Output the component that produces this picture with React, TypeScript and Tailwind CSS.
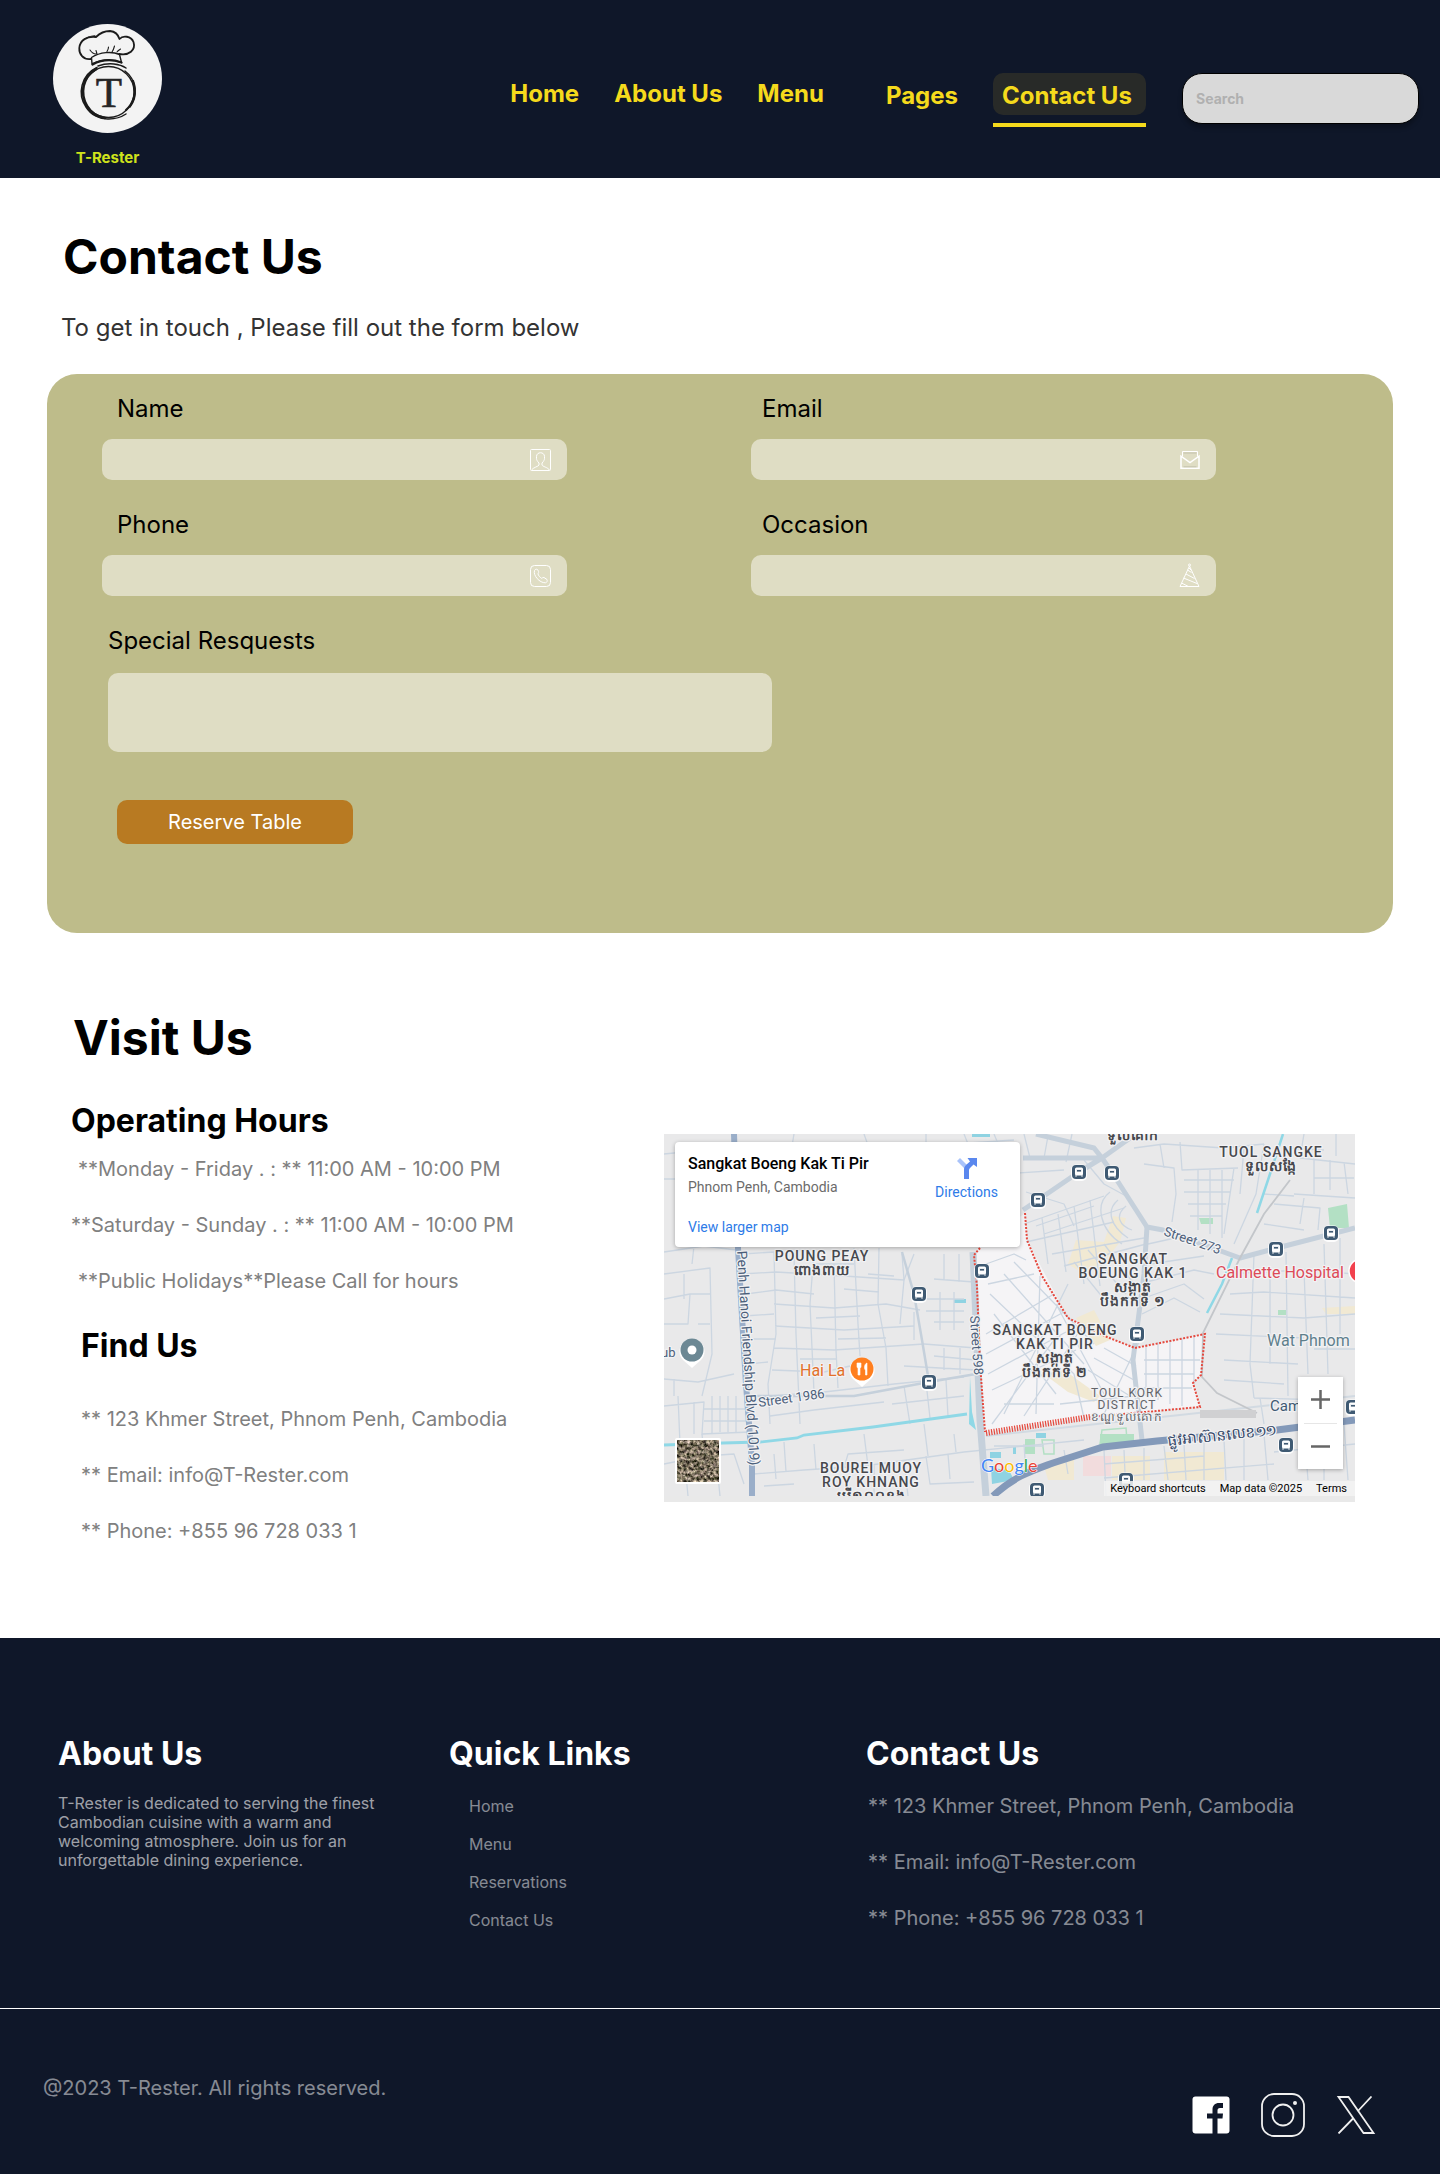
import type { ReactNode } from "react";

const NAV_LINKS = ["Home", "About Us", "Menu"];
const QUICK_LINKS = ["Home", "Menu", "Reservations", "Contact Us"];
const HOURS = [
  { text: "**Monday - Friday . : ** 11:00 AM - 10:00 PM", indent: true },
  { text: "**Saturday - Sunday . : ** 11:00 AM - 10:00 PM", indent: false },
  { text: "**Public Holidays**Please Call for hours", indent: true },
];
const ADDRESS = [
  "** 123 Khmer Street, Phnom Penh, Cambodia",
  "** Email: info@T-Rester.com",
  "** Phone: +855 96 728 033 1",
];

function Logo() {
  return (
    <svg viewBox="0 0 109 109" className="size-[109px]" role="img" aria-label="T-Rester logo">
      <circle cx="54.5" cy="54.5" r="54.5" fill="#f3f3f3" />
      <g fill="none" stroke="#1b1b1b" strokeLinecap="round" strokeLinejoin="round">
        <path d="M38 35C30 36 26 30 26.300 24C27 16 34 12 43 13C47 9 52 7 57 7C62 7.500 65 10 66.500 15C70 11 78 12 80.500 18C83 26 76 32 66 30" strokeWidth="1.800" />
        <path d="M30 16C34 13 38 12 42 11.500" strokeWidth="0.800" />
        <path d="M39 40L38.500 33.500C47 28 59 27 66.500 30.500L68.500 38.500C58 34.500 48 35.500 39 40Z" strokeWidth="1.400" />
        <path d="M39.500 40.500C48 36 59 35 68.500 38.500" strokeWidth="2.200" />
        <path d="M37 26C39 29 41 30 43 30M43 26.500L44 30M54 27.500C55 26 55.500 25 55.500 23M59 28C60.500 26 61 24 61.500 22M64 28C65 26.500 66 26 67.500 25" strokeWidth="1.100" />
        <circle cx="55.500" cy="68" r="25.500" strokeWidth="1.300" />
        <path d="M44 43.500C28 51 24 70 33 83C38 91 47 95.500 56 95C64 95 70 92 73 90" strokeWidth="1.500" />
        <path d="M43 45C29 53 27 70 34 82C38 89 45 93 52 94" strokeWidth="2.600" />
        <path d="M45 42C56 38 67 40 73 44M72 47C84 56 85 73 77 83" strokeWidth="1.500" />
        <path d="M80 57C84 68 81 79 73 86" strokeWidth="2.200" />
      </g>
      <text x="56" y="83" textAnchor="middle" fontSize="43" fontWeight="400" fill="#262626" stroke="#262626" strokeWidth="0.600" fontFamily="'Liberation Serif', serif">
        T
      </text>
    </svg>
  );
}

function Header() {
  return (
    <header className="flex min-h-[178px] justify-between bg-[#0f1729] pl-[53px] pr-[21px]">
      <a href="#home" className="flex flex-col items-center pt-6 text-[15px] font-bold leading-[18px] text-[#cfe31b]">
        <Logo />
        <span className="mt-4">T-Rester</span>
      </a>
      <div className="flex items-start pt-[73px]">
        <nav aria-label="Main" className="flex items-start text-2xl font-bold leading-[29px] text-[#f5da1c]">
          <div className="flex gap-[35px] pt-[6px]">
            {NAV_LINKS.map((name) => (
              <a key={name} href="#top">
                {name}
              </a>
            ))}
          </div>
          <div className="ml-[62px] flex gap-[35px]">
            <a href="#pages" className="pt-2">
              Pages
            </a>
            <a href="#contact" aria-current="page" className="w-[153px] border-b-4 border-[#f5da1c] pb-2">
              <span className="block rounded-[10px] bg-[#282a28] pb-[5px] pl-[9px] pt-2">Contact Us</span>
            </a>
          </div>
        </nav>
        <input
          type="search"
          aria-label="Search"
          placeholder="Search"
          className="ml-9 h-[51px] w-[237px] rounded-[20px] border border-black bg-[#d9d9d9] px-[13px] text-sm font-bold text-black shadow-[0_4px_4px_rgba(0,0,0,0.25)] outline-none placeholder:text-[#b0b0b0]"
        />
      </div>
    </header>
  );
}

function PersonIcon() {
  return (
    <svg viewBox="0 0 21 22" className="h-[22px] w-[21px]" fill="none" stroke="#fff" aria-hidden="true">
      <rect x="0.500" y="0.500" width="20" height="21" rx="1" />
      <path d="M1.500 21C3 18.500 8.500 17.500 9 16V14C7 12 6.500 10.500 6.500 9.500V7.500C6.500 2.500 14.500 2.500 14.500 7.500V9.500C14.500 10.500 14 12 12 14V16C12.500 17.500 18 18.500 19.500 21" strokeWidth="1" />
    </svg>
  );
}

function MailIcon() {
  return (
    <svg viewBox="0 0 20 18" className="h-[18px] w-5" fill="none" stroke="#fff" aria-hidden="true">
      <path d="M2.500 5.500V0.500H17.500V5.500" />
      <path d="M1 5.200V17.300H19V5.200L10 11.500Z" strokeWidth="1.500" />
      <path d="M3.500 2H16.500M3.500 15.800H16.500" stroke="#c4c2ae" />
    </svg>
  );
}

function PhoneIcon() {
  return (
    <svg viewBox="0 0 21 22" className="h-[22px] w-[21px]" fill="none" stroke="#fff" aria-hidden="true">
      <rect x="0.500" y="0.500" width="20" height="21" rx="4" />
      <path d="M4.500 5.500C3 10.500 9.500 18 15.500 17.800C17 17.500 17.500 16 17 14.500L14 12.500C12.500 12.300 12 13.500 11.500 13.300C9.500 12 8.500 10.500 8 9C8 8 9 7.800 8.600 6.500L7.500 4.500C6.500 3.800 5 4.300 4.500 5.500Z" strokeWidth="1" />
    </svg>
  );
}

function PartyIcon() {
  return (
    <svg viewBox="0 0 21 25" className="h-[25px] w-[21px]" fill="none" stroke="#fff" aria-hidden="true">
      <path d="M10.500 3L1 23.500H20Z" />
      <circle cx="10.500" cy="2" r="1" />
      <path d="M8.500 7L12.500 9.500M7 11L15.500 15.500M4.500 15L18 20.500M2.500 20L9.500 23.500M10 5L12 7" />
    </svg>
  );
}

interface FieldProps {
  id: string;
  label: string;
  type: string;
  icon: ReactNode;
}

function Field({ id, label, type, icon }: FieldProps) {
  return (
    <div className="w-full max-w-[465px]">
      <label htmlFor={id} className="block text-2xl leading-[29px] text-black">
        {label}
      </label>
      <div className="mt-4 flex h-[41px] items-center rounded-[10px] bg-[#dfddc4] pr-4">
        <input id={id} type={type} className="h-full min-w-0 flex-1 bg-transparent px-3 outline-none" />
        {icon}
      </div>
    </div>
  );
}

function ContactForm() {
  return (
    <form className="mx-[47px] mt-8 rounded-[30px] bg-[#bebc8a] pb-[89px] pl-[55px] pr-12 pt-5" onSubmit={(e) => e.preventDefault()}>
      <div className="grid grid-cols-[649px_1fr]">
        <div className="flex flex-col gap-[30px] [&_label]:pl-[15px]">
          <Field id="name" label="Name" type="text" icon={<PersonIcon />} />
          <Field id="phone" label="Phone" type="tel" icon={<PhoneIcon />} />
        </div>
        <div className="flex flex-col gap-[30px] [&_label]:pl-[11px]">
          <Field id="email" label="Email" type="email" icon={<MailIcon />} />
          <Field id="occasion" label="Occasion" type="text" icon={<PartyIcon />} />
        </div>
      </div>
      <div className="mt-[30px] pl-[6px]">
        <label htmlFor="requests" className="block text-2xl leading-[29px] text-black">
          Special Resquests
        </label>
        <textarea id="requests" className="mt-[18px] block h-[79px] w-full max-w-[664px] resize-none rounded-[10px] bg-[#dfddc4] p-3 outline-none" />
        <button type="submit" className="ml-[9px] mt-12 h-11 w-[236px] rounded-[10px] bg-[#b87a22] text-xl leading-6 text-white">
          Reserve Table
        </button>
      </div>
    </form>
  );
}

const MINOR_ROADS = [
  "M0 20L30 17L68 14M0 45H12M78 20L150 10L260 12L350 6M130 0L128 12M200 0L205 14M262 0V12M300 0L304 10",
  "M0 118L40 112L72 116M0 140L46 134L48 220L38 262M0 165L26 160L46 160M0 190H24L26 160M0 245L34 248L70 240M14 262L16 310M0 272L40 268L38 300L86 298M28 130L30 112M20 140V165M34 190L46 190M10 245V262M30 268V300",
  "M40 275H84M48 262V300M56 262V298M64 262V298M72 262V298M40 287H84M0 330L40 322L70 320L80 350M40 322L38 300M110 320L112 345M20 320L24 362M52 322L56 362",
  "M78 120L110 118L112 200L104 250L106 290M78 140L112 138L180 142L240 146M82 160L112 156L150 160M80 182L110 180M82 205H112M84 230L104 228M110 170L170 174L222 170L256 176M111 192L180 196L250 192M110 214L170 216L260 210M108 236L160 238L186 232M106 262L160 258L230 250L300 243M106 282L150 276L220 268",
  "M130 120L132 200L136 290M150 118L146 170L150 258M170 130L172 216L174 254M190 114L194 190L196 222M215 114L214 170L222 214L224 252M238 120L240 146L236 190M204 140L230 142M180 155L215 158M150 130H190M152 184L196 182M136 225H172M174 205L222 204",
  "M250 178V206M270 145L310 148M276 158V196M290 158V196M262 165H300M262 177H300M270 188H300M240 146L250 120M280 120V146M295 120V148M260 210L312 214M270 222L312 226M240 232L312 236M280 214V236M296 214V240M240 252L246 290M262 248L266 284M282 246L284 282M228 270L300 262",
  "M90 340L140 336L200 332L300 318L420 306M100 352L130 350M210 330V362M180 334L184 320L240 316M240 326L244 362M262 322L266 350L310 348M284 320L286 345M150 310L152 336M120 308L122 338M200 300L204 332M260 290L264 322M290 300L292 318",
  "M330 0L340 24M360 0L366 24M384 2L380 24M340 40L400 36M362 58L400 70L410 92M360 90L440 62M372 92L430 72M380 100L460 74M362 108L450 88M388 120L480 104M400 132L482 110M378 84L384 130M394 80L402 138M410 72L420 150M426 66L436 152",
  "M402 28L408 0M420 26L440 50L462 62M446 58C430 70 436 96 458 110M454 66C442 76 446 92 464 104M462 72C450 82 456 92 468 96M440 110L470 150M424 116L462 160M410 128L444 170M484 110L520 102L560 118M486 130L540 122M482 148L530 136L550 140M480 164L520 150L540 165M478 180L510 164L536 178",
  "M470 14L500 10L560 14L600 10M480 30L510 34L512 60L508 88M496 10L500 34M516 8L518 36L574 34M520 46H570M520 58H566M524 70H562M526 82H558M534 36V96M546 36V100M558 36V104M570 34L560 100M580 14L576 60M600 10L592 60L570 110",
  "M640 0L636 24L691 30M650 24V60M666 26V56M680 28L684 60M630 60L691 64M610 70L656 74L654 96M640 64L636 90M620 14L660 16M600 90L640 96M690 44H650M600 60L630 62M672 0V22",
  "M560 140L640 136L691 140M566 160L600 158L691 164M590 120L586 230L590 264M606 136V230M622 118L624 262M640 136L644 240M660 110L664 240M676 104V200M556 180L640 184L691 180M552 200L640 204M560 226L634 230M560 246L620 250M590 264L660 266M650 215H691M596 264L600 290",
  "M322 130L350 120L362 126M324 150L370 140M326 160L410 240L420 284M322 200L390 160M322 220L400 178M324 240L402 198M328 256L412 216M340 280L404 150M360 282L420 190M328 290L390 206M376 142L372 280M340 140L420 230M350 128L430 210M330 180L392 260M396 270L470 262M340 270H390M392 170L440 260",
  "M482 210V262M494 208V266M506 206V270M518 204V272M530 202V250M480 226H536M480 240H530M480 254H528M440 214L472 232M430 224L470 246M424 236L466 262M476 206L440 280",
  "M330 312H380M360 310L362 340M400 316L404 340M440 316L442 362M460 316L462 362M480 314V346M500 312L504 346M520 310L522 346M540 308V346M560 306L562 346M580 302V346M600 300L604 346M440 330L540 322M440 344L610 330M610 318L691 310M640 296L644 346M660 294V346M680 290L684 346",
];

const BUS_STOPS: [number, number][] = [
  [415, 38], [448, 39], [374, 66], [612, 115], [667, 99], [473, 200], [622, 311],
  [373, 356], [462, 346], [689, 273], [318, 137], [255, 160], [265, 248],
];

interface PlaceProps {
  x: number;
  y: number;
  lines: string[];
}

function Place({ x, y, lines }: PlaceProps) {
  return (
    <text
      textAnchor="middle"
      fontSize="14"
      letterSpacing="1"
      fontWeight="500"
      fill="#47484d"
      stroke="#f2f2f4"
      strokeWidth="2.500"
      strokeLinejoin="round"
      paintOrder="stroke"
    >
      {lines.map((line, i) => (
        <tspan key={line} x={x} y={y + i * 14} fontWeight={line > "z" ? 700 : 500}>
          {line}
        </tspan>
      ))}
    </text>
  );
}

function MapDrawing() {
  return (
    <svg
      viewBox="0 0 691 362"
      preserveAspectRatio="xMinYMin slice"
      className="block h-full w-full font-[Roboto,'Noto_Sans',sans-serif]"
      role="img"
      aria-label="Street map of Sangkat Boeng Kak Ti Pir"
    >
      <defs>
        <filter id="terrain" x="0" y="0" width="1" height="1" colorInterpolationFilters="sRGB">
          <feTurbulence type="fractalNoise" baseFrequency="0.3" numOctaves="4" seed="7" />
          <feColorMatrix values="1.400 0 0 0 -0.220  1.300 0.100 0 0 -0.260  1.200 0 0.100 0 -0.280  0 0 0 0 1" />
        </filter>
        <g id="bus">
          <rect x="-8" y="-7.500" width="16" height="16.500" rx="5" fill="#fff" opacity="0.900" />
          <rect x="-7" y="-7" width="14" height="14" rx="4" fill="#3f5a73" />
          <rect x="-4" y="-4.500" width="8" height="8" rx="1.500" fill="#fff" />
          <path d="M-2.500 -2.500H2.500V0H-2.500ZM-3 3V5M3 3V5" fill="#3f5a73" stroke="#fff" strokeWidth="0.800" />
        </g>
      </defs>
      <rect width="691" height="362" fill="#e9e9ea" />
      <path d="M310 118L313 153L316 229L321 298L426 283L536 273L529 249L537 241L541 200L471 214L443 203L404 184L363 106L361 79Z" fill="#f5f4f6" />
      <g fill="#f1e9d3">
        <path d="M449 82L462 84L456 108L440 128L420 140L404 130L412 106L440 108Z" />
        <path d="M412 184L430 176L446 206L432 212Z M380 240L400 236L436 262L430 268L404 258Z" />
        <path d="M658 174L691 172V180H662Z M500 318H560V346H500Z M448 322H486V346H448Z M380 332L410 320V346H384Z M650 310H672V330H650Z" />
      </g>
      <path d="M419 322H447V342H419Z" fill="#f2dcdd" />
      <path d="M664 74L683 70L685 94H666ZM535 84H549V90H537ZM614 176H622V181H614ZM361 305H371V320H361ZM436 300H470V310H436Z" fill="#b3e0c4" />
      <path d="M378 306H390V320H380ZM438 296L462 294L463 306L436 310Z" fill="none" stroke="#b3e0c4" strokeWidth="1.500" />
      <g fill="#8fd3e2">
        <path d="M326 318H337V324H326ZM327 334L345 336L350 346L328 350ZM372 299H382V304H372ZM290 165H302V169H290ZM308 0H326V3H308ZM349 313H352V320H349Z" />
      </g>
      <g fill="none" stroke="#ccd6e1" strokeWidth="1.300" strokeLinejoin="round">
        {MINOR_ROADS.map((d) => (
          <path key={d} d={d} />
        ))}
      </g>
      <g fill="none" stroke="#c5d0db" strokeWidth="5" strokeLinejoin="round">
        <path d="M359 76L374 66L415 38L438 24L459 9L472 0M438 24L359 24M438 24L430 14L372 0M438 24L449 40L483 93L499 96L576 124L613 114L691 94" />
        <path d="M483 93L480 140L478 156L469 226L478 306" />
        <path d="M309 118L312 186L316 286L322 362" strokeWidth="7" />
        <path d="M238 118L250 160L258 206L265 248M80 262L190 262L265 248L312 240" strokeWidth="2.500" />
      </g>
      <path d="M322 302L691 262" stroke="#d2dae2" strokeWidth="2" fill="none" />
      <g fill="none" stroke="#8fd8e6">
        <path d="M0 311L59 309L96 308L133 304L140 301L209 293L303 280" strokeWidth="2.800" />
        <path d="M619 0L606 40L593 79M568 124L558 150L543 179" strokeWidth="2.500" />
      </g>
      <path d="M306 243L305 290L312 296L308 278Z" fill="#8fd8e6" />
      <path d="M626 46L600 80L576 124L539 199L538 243L553 259L593 279" fill="none" stroke="#c3c6ca" strokeWidth="1.800" />
      <path d="M536 276H592V284H536Z" fill="#d0d0d2" />
      <path d="M70 0L74 114L82 250L88 329V362" fill="none" stroke="#9aaec9" strokeWidth="6" />
      <path d="M329 362C350 342 370 336 389 329L439 313L493 307L613 296L691 286" fill="none" stroke="#8399b9" strokeWidth="7" />
      <g fill="none" stroke="#e5483d">
        <path d="M322 299L426 283" strokeWidth="6" strokeDasharray="1.200 1.400" />
        <path d="M316 114L310 121L313 153L316 229L321 298" strokeWidth="2" strokeDasharray="2 1.500" />
        <path d="M361 79L363 106L378 142L404 184L443 203L471 214L541 200L537 241L529 249L536 273L426 283" strokeWidth="2" strokeDasharray="2 1.500" />
      </g>
      {BUS_STOPS.map(([x, y]) => (
        <use key={`${x}-${y}`} href="#bus" x={x} y={y} />
      ))}
      <Place x={158} y={127} lines={["POUNG PEAY", "ពោងពាយ"]} />
      <Place x={607} y={23} lines={["TUOL SANGKE", "ទួលសង្កែ"]} />
      <Place x={469} y={6} lines={["ទួលគោក"]} />
      <Place x={469} y={130} lines={["SANGKAT", "BOEUNG KAK 1", "សង្កាត់", "បឹងកក់ទី ១"]} />
      <Place x={391} y={201} lines={["SANGKAT BOENG", "KAK TI PIR", "សង្កាត់", "បឹងកក់ទី ២"]} />
      <Place x={207} y={339} lines={["BOUREI MUOY", "ROY KHNANG", "បុរី១០០ខ្នង"]} />
      <g fill="#626469" stroke="#f2f2f4" strokeWidth="2.500" paintOrder="stroke" strokeLinejoin="round" fontSize="12" letterSpacing="1" textAnchor="middle">
        <text x="463" y="263">TOUL KORK</text>
        <text x="463" y="275">DISTRICT</text>
        <text x="463" y="287">ខណ្ឌទួលគោក</text>
      </g>
      <g fill="#4c5f7a" stroke="#f2f2f4" strokeWidth="2.500" paintOrder="stroke" strokeLinejoin="round" fontSize="13">
        <text transform="translate(73 117) rotate(86.500)" fontSize="14">Penh Hanoi Friendship Blvd (1019)</text>
        <text transform="translate(306 182) rotate(86)">Street 598</text>
        <text transform="translate(95 273) rotate(-8)">Street 1986</text>
        <text transform="translate(499 101) rotate(19)">Street 273</text>
        <text transform="translate(504 312) rotate(-6)" fontSize="15" fontWeight="500" fill="#344767">ផ្លូវអាស៊ានលេខ១១</text>
        <text x="-3" y="223">ub</text>
        <text x="603" y="212" fontSize="16" fill="#5f7f8c">Wat Phnom</text>
        <text x="606" y="277" fontSize="15" fill="#3f5a73">Cam</text>
        <text x="136" y="242" fontSize="16" fill="#e2702a">Hai La</text>
        <text x="552" y="144" fontSize="16" fill="#dd4a58">Calmette Hospital</text>
      </g>
      <circle cx="697" cy="137" r="12" fill="#f2414e" stroke="#fff" strokeWidth="1.500" />
      <path d="M198 253L189 245A12.500 12.500 0 1 1 207 245Z" fill="#fff" />
      <circle cx="198" cy="235" r="11.500" fill="#ff7f1f" />
      <path d="M193 229H197V233L196 234.500V241H194V234.500L193 233ZM203 229C200 230 200 235 201.500 236V241H203Z" fill="#fff" stroke="#fff" strokeWidth="0.600" />
      <path d="M28 234L19 226A12.500 12.500 0 1 1 37 226Z" fill="#fff" />
      <circle cx="28" cy="216" r="11.500" fill="#6c8894" />
      <circle cx="28" cy="216" r="4.500" fill="#fff" />
      <rect x="11" y="304" width="46" height="46" rx="2" fill="#fff" />
      <rect x="13" y="306" width="42" height="42" filter="url(#terrain)" />
      <text x="317" y="338" fontSize="18" fontFamily="Lato, sans-serif" stroke="#fff" strokeWidth="1" paintOrder="stroke">
        <tspan fill="#4285f4">G</tspan>
        <tspan fill="#ea4335">o</tspan>
        <tspan fill="#fbbc05">o</tspan>
        <tspan fill="#4285f4">g</tspan>
        <tspan fill="#34a853">l</tspan>
        <tspan fill="#ea4335">e</tspan>
      </text>
    </svg>
  );
}

function MapPanel() {
  return (
    <div className="relative h-[362px] w-full overflow-hidden font-[Roboto,sans-serif]">
      <MapDrawing />
      <div className="absolute left-[11px] top-2 flex h-[105px] w-[345px] justify-between rounded-sm bg-white pl-[13px] pr-[22px] pt-3 shadow-[0_1px_4px_rgba(0,0,0,0.3)]">
        <div>
          <h3 className="text-base font-medium leading-[19px] text-black">Sangkat Boeng Kak Ti Pir</h3>
          <p className="mt-[6px] text-sm leading-4 text-[#6b6b6b]">Phnom Penh, Cambodia</p>
          <a href="#map" className="mt-6 block text-sm leading-4 text-[#2e7be8]">
            View larger map
          </a>
        </div>
        <a href="#directions" className="flex flex-col items-center text-sm leading-4 text-[#2e7be8]">
          <svg viewBox="0 0 22 22" className="mt-[3px] size-[22px]" aria-hidden="true">
            <path d="M1 4L4 1L11 8V14L8 11Z" fill="#a9c3fa" />
            <path d="M8 22V13C8 11 8.500 9.500 10 8L14 4.500L11.500 1H21V10L17.500 7.500L14 11C13.200 12 13 12.500 13 14V22Z" fill="#5a87ee" />
          </svg>
          <span className="mt-[5px]">Directions</span>
        </a>
      </div>
      <div className="absolute bottom-[27px] right-3 flex h-[92px] w-[45px] flex-col divide-y divide-[#e6e6e6] bg-white px-[6px] shadow-[0_1px_4px_rgba(0,0,0,0.3)]">
        <button type="button" aria-label="Zoom in" className="flex flex-1 items-center justify-center">
          <svg viewBox="0 0 19 19" className="size-[19px]" stroke="#666" strokeWidth="2.500" aria-hidden="true">
            <path d="M9.500 0V19M0 9.500H19" />
          </svg>
        </button>
        <button type="button" aria-label="Zoom out" className="flex flex-1 items-center justify-center">
          <svg viewBox="0 0 19 19" className="size-[19px]" stroke="#666" strokeWidth="2.500" aria-hidden="true">
            <path d="M0 9.500H19" />
          </svg>
        </button>
      </div>
      <div className="absolute bottom-0 right-0 flex gap-[14px] bg-[#f3f3f3]/85 pl-[6px] pr-2 text-[11px] leading-[15px] text-black">
        <button type="button">Keyboard shortcuts</button>
        <span>Map data ©2025</span>
        <a href="#terms">Terms</a>
      </div>
    </div>
  );
}

function VisitUs() {
  return (
    <section className="pb-[95px] pl-[71px] pr-[85px] pt-[76px]">
      <h2 className="pl-[2px] text-5xl font-bold leading-[58px] text-black">Visit Us</h2>
      <div className="mt-[34px] grid grid-cols-[593px_1fr]">
        <div>
          <h3 className="text-[32px] font-bold leading-[39px] text-black">Operating Hours</h3>
          <ul className="mt-[17px] space-y-8 text-xl leading-6 text-[#808080]">
            {HOURS.map((row) => (
              <li key={row.text} className={row.indent ? "pl-[7px]" : ""}>
                {row.text}
              </li>
            ))}
          </ul>
          <div className="pl-[10px]">
            <h3 className="mt-[33px] text-[32px] font-bold leading-[39px] text-black">Find Us</h3>
            <ul className="mt-[42px] space-y-8 text-xl leading-6 text-[#808080]">
              {ADDRESS.map((line) => (
                <li key={line}>{line}</li>
              ))}
            </ul>
          </div>
        </div>
        <div className="pt-[33px]">
          <div className="border-b-[6px] border-[#e9e9e9]">
            <MapPanel />
          </div>
        </div>
      </div>
    </section>
  );
}

function Footer() {
  return (
    <footer className="bg-[#0f1729] text-white">
      <div className="grid grid-cols-[391px_417px_1fr] pb-[78px] pl-[58px] pr-12 pt-24">
        <section>
          <h2 className="text-[32px] font-bold leading-[39px]">About Us</h2>
          <p className="mt-[21px] max-w-[330px] text-base leading-[19px] text-white/60">
            T-Rester is dedicated to serving the finest Cambodian cuisine with a warm and welcoming atmosphere. Join us for an unforgettable dining experience.
          </p>
        </section>
        <nav aria-label="Quick links">
          <h2 className="text-[32px] font-bold leading-[39px]">Quick Links</h2>
          <ul className="mt-6 space-y-[19px] pl-5 text-base leading-[19px] text-white/50">
            {QUICK_LINKS.map((name) => (
              <li key={name}>
                <a href="#top">{name}</a>
              </li>
            ))}
          </ul>
        </nav>
        <section>
          <h2 className="text-[32px] font-bold leading-[39px]">Contact Us</h2>
          <ul className="mt-[21px] space-y-8 pl-[2px] text-xl leading-6 text-white/50">
            {ADDRESS.map((line) => (
              <li key={line}>{line}</li>
            ))}
          </ul>
        </section>
      </div>
      <div className="flex items-start justify-between border-t border-white pb-[37px] pl-[43px] pr-16 pt-[67px]">
        <p className="text-xl leading-6 text-white/50">@2023 T-Rester. All rights reserved.</p>
        <div className="mt-[17px] flex items-center gap-[31px]">
          <a href="#facebook" aria-label="Facebook">
            <svg viewBox="0 0 38 38" className="size-[38px]" aria-hidden="true">
              <rect x="0.500" y="0.500" width="37" height="37" rx="3" fill="#fff" />
              <path d="M20.500 38V22.500H15V17.500H20.500V13.500C20.500 9.500 23 7 27 7H31V12H28C26.200 12 25.500 13 25.500 14.500V17.500H31L30.500 22.500H25.500V38Z" fill="#0f1729" />
            </svg>
          </a>
          <a href="#instagram" aria-label="Instagram">
            <svg viewBox="0 0 44 44" className="size-11" fill="none" stroke="#f0f0f0" strokeWidth="1.800" aria-hidden="true">
              <rect x="1" y="1" width="42" height="42" rx="12" />
              <circle cx="22" cy="22" r="10.500" />
              <circle cx="34" cy="10" r="2" fill="#f0f0f0" stroke="none" />
            </svg>
          </a>
          <a href="#x" aria-label="X">
            <svg viewBox="0 0 40 38" className="h-[38px] w-10" fill="none" stroke="#f0f0f0" strokeWidth="1.800" aria-hidden="true">
              <path d="M2.500 1H12.500L37.500 37H27.500ZM35.500 0.500L21.500 15.500M17.500 22L2.500 37.500" />
            </svg>
          </a>
        </div>
      </div>
    </footer>
  );
}

export default function App() {
  return (
    <div className="bg-white font-[Inter,sans-serif]">
      <Header />
      <main>
        <section className="pt-[50px]">
          <h1 className="pl-[63px] text-5xl font-bold leading-[58px] text-black">Contact Us</h1>
          <p className="mt-[27px] pl-[61px] text-2xl leading-[29px] text-[#333]">To get in touch , Please fill out the form below</p>
          <ContactForm />
        </section>
        <VisitUs />
      </main>
      <Footer />
    </div>
  );
}
